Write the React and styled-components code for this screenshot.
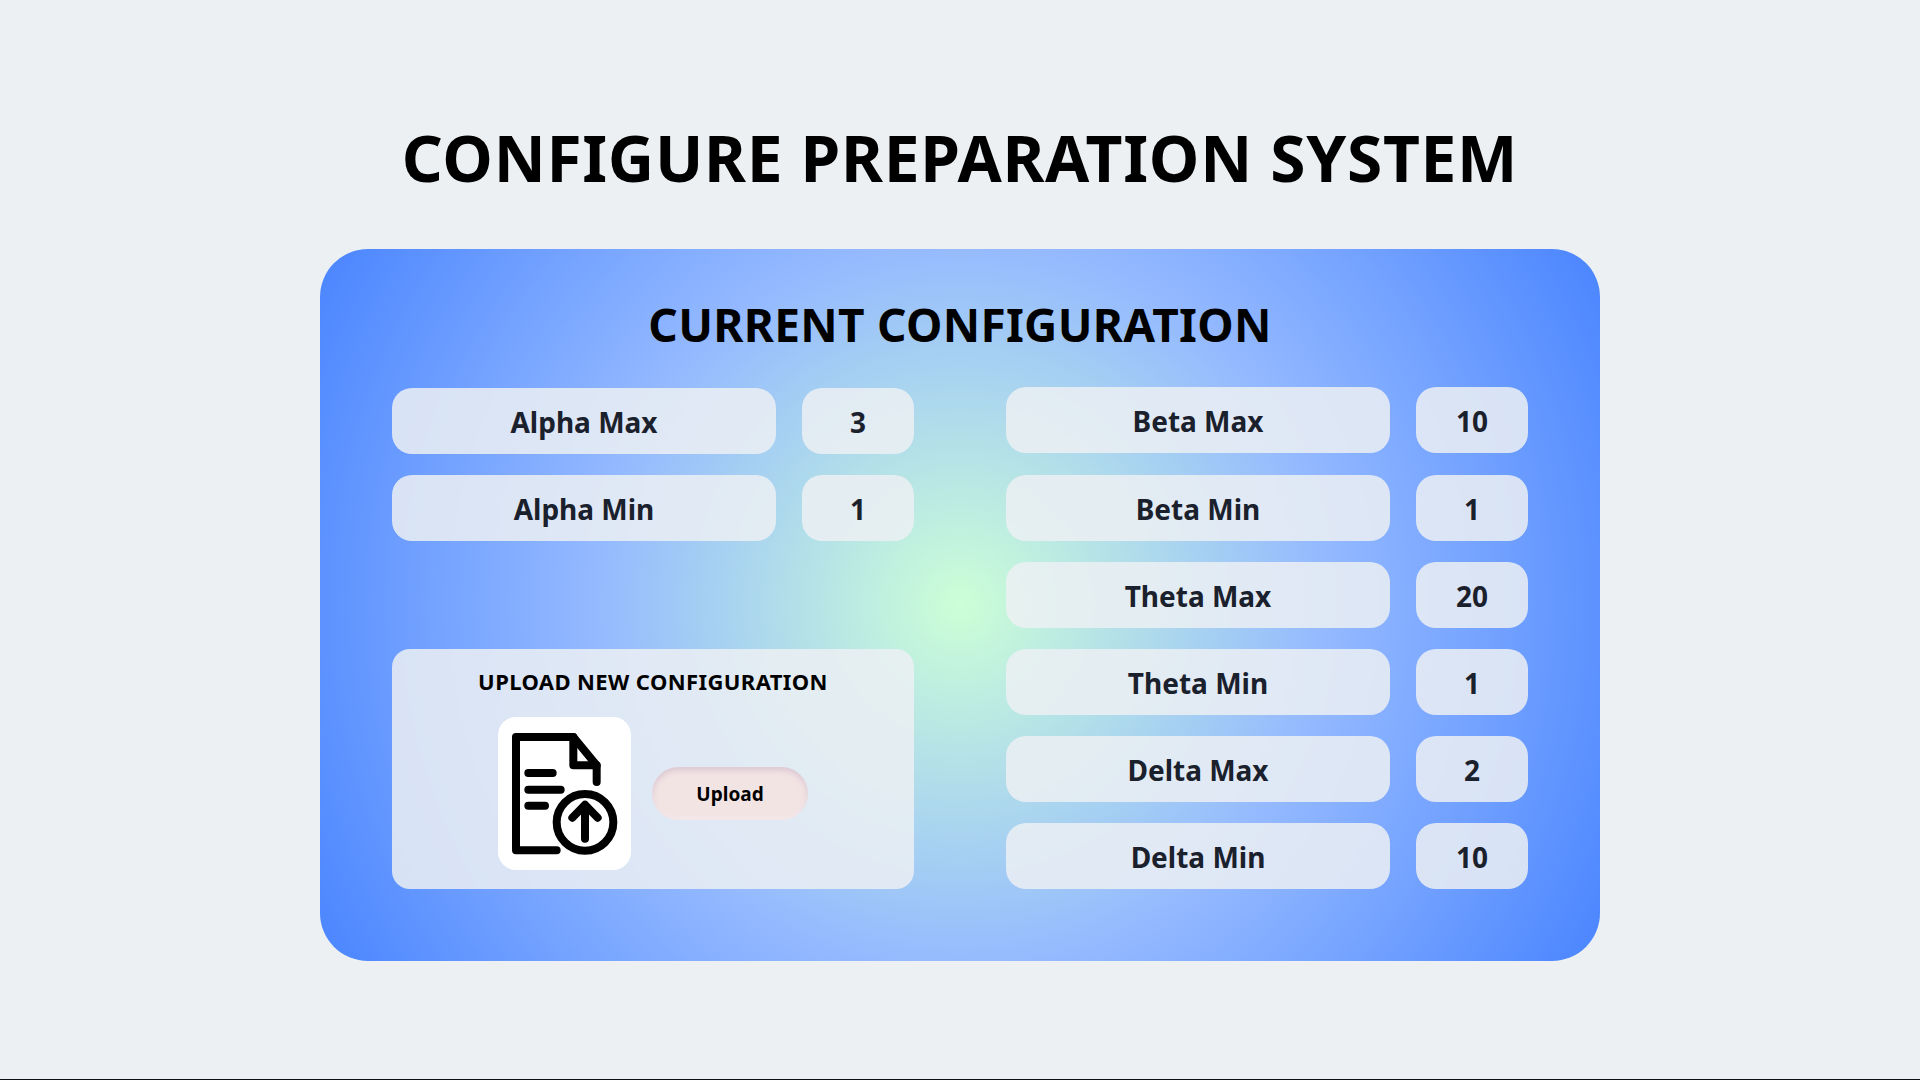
import React from "react";
import styled, { createGlobalStyle } from "styled-components";

const Global = createGlobalStyle`
  html, body { margin: 0; padding: 0; }
  body { background: #ecf0f3; font-family: "Noto Sans", "Open Sans", sans-serif; }
`;

const Page = styled.div`
  height: 1080px;
  display: flex;
  flex-direction: column;
  align-items: center;
  box-sizing: border-box;
  border-bottom: 1px solid #0d1117;
  overflow: hidden;
`;

const Title = styled.h1`
  margin: 116px 0 0;
  height: 84px;
  line-height: 84px;
  font-size: 64px;
  font-weight: 700;
  letter-spacing: 0.7px;
  color: #000;
  text-align: center;
`;

const Panel = styled.section`
  margin-top: 49px;
  width: 1280px;
  height: 712px;
  box-sizing: border-box;
  padding: 48px 72px 72px;
  border-radius: 48px;
  background: radial-gradient(circle at center, #ccffd6 0%, #94b9ff 50%, #4a85ff 100%);
  display: flex;
  flex-direction: column;
`;

const PanelTitle = styled.h2`
  margin: 0;
  height: 54px;
  line-height: 54px;
  font-size: 46px;
  font-weight: 700;
  letter-spacing: 0.3px;
  color: #000;
  text-align: center;
`;

const Columns = styled.div`
  margin-top: 36.4px;
  flex: 1;
  display: grid;
  grid-template-columns: 522px 522px;
  justify-content: space-between;
`;

const LeftColumn = styled.div`
  display: flex;
  flex-direction: column;
  justify-content: space-between;
  padding-top: 0.6px;
`;

const RightColumn = styled.div`
  display: flex;
  flex-direction: column;
  justify-content: space-between;
`;

const Stack = styled.div`
  display: flex;
  flex-direction: column;
  gap: 21px;
`;

const Row = styled.div`
  display: grid;
  grid-template-columns: 384px 112px;
  column-gap: 26px;
`;

const Pill = styled.div`
  height: 66px;
  box-sizing: border-box;
  padding-top: 2px;
  border-radius: 20px;
  background: rgba(236, 240, 243, 0.85);
  color: #1a202c;
  font-size: 28px;
  font-weight: 700;
  display: flex;
  align-items: center;
  justify-content: center;
`;

const UploadCard = styled.div`
  height: 240px;
  box-sizing: border-box;
  border-radius: 18px;
  background: rgba(236, 240, 243, 0.85);
  padding-top: 19px;
  display: flex;
  flex-direction: column;
  align-items: center;
`;

const UploadTitle = styled.h3`
  margin: 0;
  height: 27px;
  line-height: 27px;
  font-size: 22px;
  font-weight: 700;
  letter-spacing: 0.4px;
  color: #000;
`;

const UploadRow = styled.div`
  margin-top: 22px;
  display: flex;
  align-items: center;
  gap: 21px;
`;

const IconBox = styled.div`
  width: 133px;
  height: 153px;
  border-radius: 18px;
  background: #fff;
  display: flex;
`;

const UploadButton = styled.button`
  width: 156px;
  height: 53px;
  border: 0;
  border-radius: 27px;
  background: #f3e4e4;
  box-shadow: inset 0 3px 6px rgba(170, 140, 175, 0.35), inset 0 -2px 4px rgba(255, 255, 255, 0.4);
  color: #000;
  font-family: inherit;
  font-size: 19px;
  font-weight: 700;
`;

const leftRows = [["Alpha Max", 3], ["Alpha Min", 1]];
const rightRows = [
  ["Beta Max", 10], ["Beta Min", 1], ["Theta Max", 20],
  ["Theta Min", 1], ["Delta Max", 2], ["Delta Min", 10],
];

const ConfigRow = ({ label, value }) => (
  <Row>
    <Pill>{label}</Pill>
    <Pill>{value}</Pill>
  </Row>
);

const FileUploadIcon = () => (
  <svg width="133" height="153" viewBox="24 20 399 459" fill="none" stroke="#000" strokeWidth="24" strokeLinecap="round" strokeLinejoin="round">
    <path d="M200 420H78V80H250L320 165V215" />
    <path d="M250 80V165H320" />
    <path d="M115 188H188M115 238H212M115 286H165" />
    <circle cx="285" cy="336" r="85" />
    <path d="M285 385V285M247 322L285 283L323 322" />
  </svg>
);

export default function App() {
  return (
    <>
      <Global />
      <Page>
        <Title>CONFIGURE PREPARATION SYSTEM</Title>
        <Panel>
          <PanelTitle>CURRENT CONFIGURATION</PanelTitle>
          <Columns>
            <LeftColumn>
              <Stack>
                {leftRows.map(([l, v]) => <ConfigRow key={l} label={l} value={v} />)}
              </Stack>
              <UploadCard>
                <UploadTitle>UPLOAD NEW CONFIGURATION</UploadTitle>
                <UploadRow>
                  <IconBox><FileUploadIcon /></IconBox>
                  <UploadButton>Upload</UploadButton>
                </UploadRow>
              </UploadCard>
            </LeftColumn>
            <RightColumn>
              {rightRows.map(([l, v]) => <ConfigRow key={l} label={l} value={v} />)}
            </RightColumn>
          </Columns>
        </Panel>
      </Page>
    </>
  );
}
